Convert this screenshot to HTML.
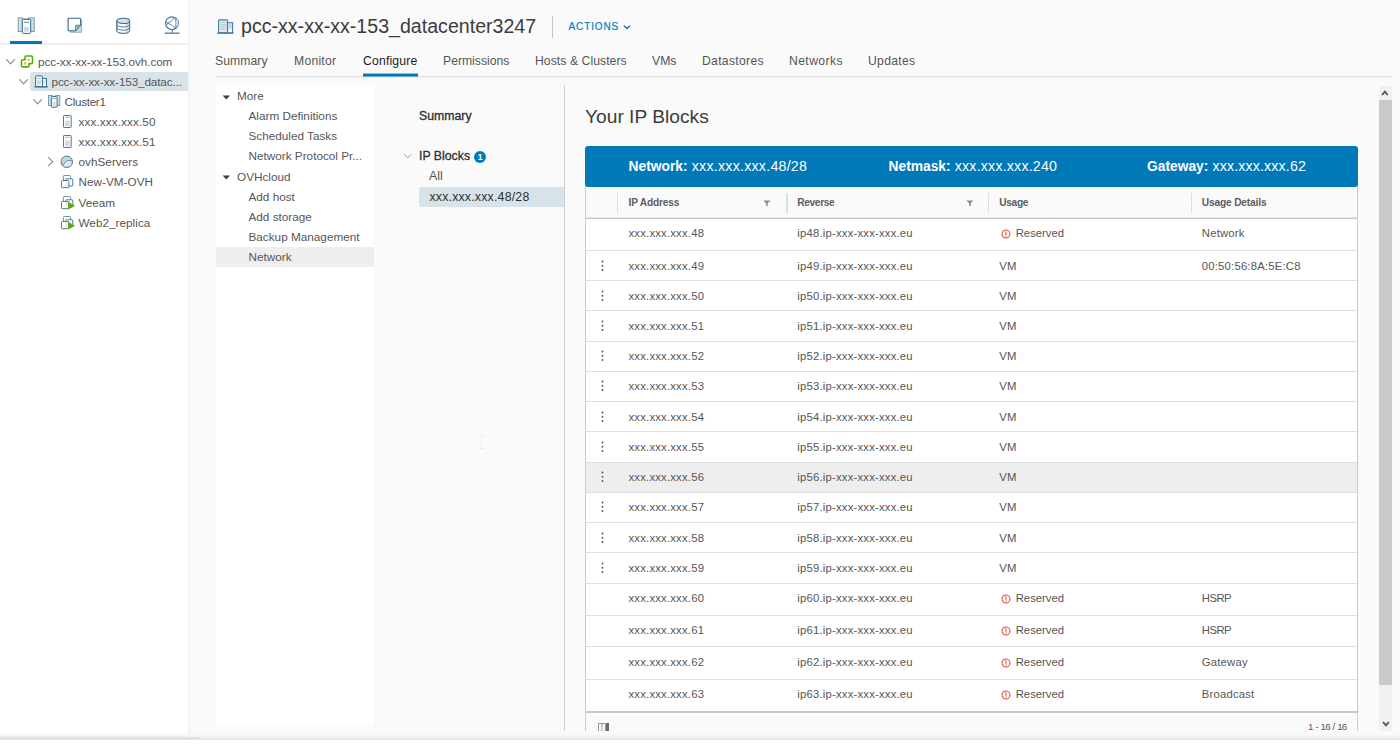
<!DOCTYPE html>
<html>
<head>
<meta charset="utf-8">
<title>vSphere Client</title>
<style>
html,body{margin:0;padding:0;}
body{width:1400px;height:744px;overflow:hidden;background:#fff;font-family:"Liberation Sans",sans-serif;color:#565656;position:relative;}
.abs{position:absolute;}
.t{position:absolute;white-space:nowrap;line-height:20px;height:20px;}
svg{display:block;position:absolute;overflow:visible;}
/* left nav */
#nav{position:absolute;left:0;top:0;width:188px;height:738px;background:#fff;}
#main{position:absolute;left:188px;top:0;width:1212px;height:738px;background:#fafafa;}
#navshadow{position:absolute;left:188px;top:0;width:3px;height:737px;background:linear-gradient(to right,#eef0f2,#fafafa);}
.tree{font-size:11.7px;color:#565656;}
.sel{position:absolute;background:#d8e3e9;}
/* tabs */
.tab{font-size:12.2px;color:#565656;}
.menu{font-size:11.75px;color:#565656;}
.cell{font-size:11.3px;letter-spacing:0.2px;color:#565656;}
.hd{font-size:10.2px;font-weight:700;color:#5e5e5e;}
.hl{position:absolute;height:1px;background:#e0e0e0;}
.vl{position:absolute;width:1px;background:#ccc;}
</style>
</head>
<body>
<div id="main"></div>
<div id="nav"></div>
<div id="navshadow"></div>

<!-- NAV-ICONS -->
<svg width="0" height="0" style="position:absolute">
<defs>
  <g id="i-host">
    <rect x="0.5" y="0.5" width="7.7" height="12" rx="0.6" fill="#fff" stroke="#4a7c99" stroke-width="1"/>
    <rect x="2" y="5.6" width="4.7" height="5.6" fill="#cfdbe2"/>
    <line x1="2.2" y1="2.3" x2="6.5" y2="2.3" stroke="#7fa2b6" stroke-width="0.8"/>
  </g>
  <g id="i-vm">
    <rect x="2.4" y="0.5" width="7.2" height="7.2" rx="0.8" fill="#fff" stroke="#6d96ad" stroke-width="1"/>
    <rect x="4.6" y="3.8" width="7.2" height="7.2" rx="0.8" fill="#fff" stroke="#4a7c99" stroke-width="1"/>
    <rect x="0.5" y="5.5" width="7.4" height="7.2" rx="0.8" fill="#fff" stroke="#4a7c99" stroke-width="1"/>
    <rect x="4.6" y="6.2" width="1.4" height="5.6" fill="#dfe7ec"/>
  </g>
  <g id="i-vmon">
    <use href="#i-vm"/>
    <path d="M7 5.8 L14 9.7 L7 13.6 Z" fill="#62a420"/>
  </g>
  <g id="i-cluster">
    <rect x="0.5" y="0.5" width="4" height="10" fill="#d5dfe5" stroke="#6d96ad" stroke-width="0.9"/>
    <rect x="7.8" y="0.5" width="4" height="10" fill="#d5dfe5" stroke="#6d96ad" stroke-width="0.9"/>
    <rect x="3.3" y="1.6" width="5.8" height="10.6" rx="0.7" fill="#fff" stroke="#37698a" stroke-width="1"/>
    <rect x="4.6" y="7.2" width="3.2" height="3.6" fill="#cfdbe2"/>
    <line x1="4.6" y1="3.6" x2="7.8" y2="3.6" stroke="#5f8ca5" stroke-width="0.8"/>
  </g>
  <g id="chev-d" fill="none" stroke="#8c8c8c" stroke-width="1.2" stroke-linecap="round" stroke-linejoin="round">
    <path d="M0.6 0.6 L4.6 4.8 L8.6 0.6"/>
  </g>
  <g id="chev-r" fill="none" stroke="#8c8c8c" stroke-width="1.2" stroke-linecap="round" stroke-linejoin="round">
    <path d="M0.6 0.6 L4.8 4.6 L0.6 8.6"/>
  </g>
</defs>
</svg>

<!-- top nav icon 1: hosts & clusters -->
<svg style="left:17px;top:17px" width="18" height="17" viewBox="0 0 18 17">
  <rect x="1.2" y="0.9" width="4.6" height="13.6" fill="#d3dee4" stroke="#6a93aa" stroke-width="0.9"/>
  <rect x="11.6" y="0.9" width="5.6" height="13.6" fill="#d3dee4" stroke="#6a93aa" stroke-width="0.9"/>
  <rect x="5.3" y="2.4" width="8.4" height="14" rx="0.9" fill="#fff" stroke="#37698a" stroke-width="1"/>
  <path d="M8 2.4 V1.2 M10.9 2.4 V1.2" stroke="#37698a" stroke-width="0.9"/>
  <line x1="7" y1="5.3" x2="12" y2="5.3" stroke="#4a7c99" stroke-width="0.9"/>
  <rect x="7" y="9.9" width="5" height="4.7" fill="#cfdbe2"/>
</svg>
<!-- icon 2: vms & templates -->
<svg style="left:67.4px;top:17.3px" width="17" height="17" viewBox="0 0 17 17">
  <path d="M3.2 3.2 H14.6 V15.3 H3.2 Z" fill="#c9d6dd" stroke="#7fa2b6" stroke-width="0.8"/>
  <path d="M1.9 1.2 H12.4 Q13.7 1.2 13.7 2.5 V8.2 L8.4 13.7 H1.9 Q1.1 13.7 1.1 12.9 V2 Q1.1 1.2 1.9 1.2 Z" fill="#fff" stroke="#2f6588" stroke-width="1.1" stroke-linejoin="round"/>
  <path d="M13.7 8.2 H9.2 Q8.4 8.2 8.4 9 V13.7 Z" fill="#9fb8c6" stroke="#4a7c99" stroke-width="0.8" stroke-linejoin="round"/>
</svg>
<!-- icon 3: storage -->
<svg style="left:116px;top:17px" width="15" height="17" viewBox="0 0 15 17">
  <path d="M0.8 3.9 V13.7 C0.8 15.2 3.8 16.4 7.2 16.4 C10.6 16.4 13.6 15.2 13.6 13.7 V3.9" fill="#fff" stroke="#4a7c99" stroke-width="1"/>
  <path d="M9.5 6 C12 5.7 13.6 4.9 13.6 3.9 V13.7 C13.6 14.8 12 15.7 9.5 16.1 Z" fill="#d5dfe5"/>
  <ellipse cx="7.2" cy="3.9" rx="6.4" ry="2.6" fill="#d5dfe5" stroke="#3c708f" stroke-width="1.1"/>
  <path d="M0.8 7.2 C0.8 8.8 3.8 9.9 7.2 9.9 C10.6 9.9 13.6 8.8 13.6 7.2" fill="none" stroke="#4a7c99" stroke-width="1"/>
  <path d="M0.8 10.5 C0.8 12.1 3.8 13.2 7.2 13.2 C10.6 13.2 13.6 12.1 13.6 10.5" fill="none" stroke="#4a7c99" stroke-width="1"/>
  <path d="M0.8 3.9 V13.7 C0.8 15.2 3.8 16.4 7.2 16.4 C10.6 16.4 13.6 15.2 13.6 13.7 V3.9" fill="none" stroke="#4a7c99" stroke-width="1"/>
</svg>
<!-- icon 4: networking -->
<svg style="left:164px;top:16.4px" width="17" height="19" viewBox="0 0 17 19">
  <circle cx="8" cy="7.2" r="6.4" fill="#fff" stroke="#4a7c99" stroke-width="1.2"/>
  <path d="M11 1.6 C13.8 4.5 13.8 10 11.2 13 L14.3 9 V5 Z" fill="#cfdbe2"/>
  <path d="M10.6 1.3 C8.5 4.8 6.2 6.2 3.6 7.2 C6.5 8 10 10 11.2 12.9 M10.6 1.3 C12.4 5 12.4 9.6 11.2 12.9 M3.6 7.2 L1.9 5.2 M3.6 7.2 L2.2 10.2" fill="none" stroke="#5f8ca5" stroke-width="1"/>
  <line x1="8.3" y1="13.8" x2="8.3" y2="17" stroke="#4a7c99" stroke-width="1"/>
  <line x1="0.8" y1="17.2" x2="15.5" y2="17.2" stroke="#4a7c99" stroke-width="1.3"/>
</svg>
<div class="abs" style="left:0;top:43px;width:188px;height:2px;background:#eeeeee"></div>
<div class="abs" style="left:10px;top:41px;width:32px;height:3px;background:#0079b8"></div>
<!-- TREE -->
<div class="sel" style="left:30px;top:72px;width:158px;height:19px;border-radius:3px 0 0 3px"></div>
<svg style="left:6px;top:59px" width="10" height="6"><use href="#chev-d"/></svg>
<svg style="left:20px;top:54px" width="14" height="14" viewBox="0 0 14 14">
  <path d="M5 5.7 V3.2 Q5 2 6.2 2 H11.3 Q12.5 2 12.5 3.2 V8.4 Q12.5 9.6 11.3 9.6 H9 V11.7 Q9 12.9 7.8 12.9 H2.7 Q1.5 12.9 1.5 11.7 V6.9 Q1.5 5.7 2.7 5.7 Z" fill="#fff" stroke="#55ad12" stroke-width="1.6" stroke-linejoin="round"/>
  <rect x="7.5" y="4.9" width="2.2" height="2.2" fill="#fdb515"/>
  <rect x="4.2" y="8.2" width="2.2" height="2.2" fill="#fdb515"/>
</svg>
<div class="t tree" style="left:38px;top:51.5px;letter-spacing:-0.06px">pcc-xx-xx-xx-153.ovh.com</div>

<svg style="left:19px;top:79px" width="10" height="6"><use href="#chev-d"/></svg>
<svg style="left:34px;top:75px" width="14" height="13" viewBox="0 0 14 13">
  <rect x="1.5" y="0.8" width="7" height="11" rx="0.9" fill="#e9eff3" stroke="#41748f" stroke-width="1"/>
  <rect x="8.5" y="3.5" width="4" height="8.3" fill="#f7f9fa" stroke="#41748f" stroke-width="1"/>
  <path d="M3.2 3.4 H6.9 M3.2 8 H6.9 M9.6 8 H11" stroke="#9db6c5" stroke-width="0.8"/>
  <path d="M3.6 5.2 V6.8 M5 5.2 V6.8 M6.4 5.2 V6.8 M9.8 5.4 V6.8 M11 5.4 V6.8" stroke="#b4c7d2" stroke-width="0.7"/>
  <line x1="0.4" y1="11.8" x2="13.7" y2="11.8" stroke="#41748f" stroke-width="1.3"/>
</svg>
<div class="t tree" style="left:51.5px;top:71.5px;letter-spacing:-0.11px">pcc-xx-xx-xx-153_datac...</div>

<svg style="left:32.5px;top:99px" width="10" height="6"><use href="#chev-d"/></svg>
<svg style="left:48px;top:95px" width="13" height="13"><use href="#i-cluster"/></svg>
<div class="t tree" style="left:64.5px;top:91.5px;letter-spacing:-0.3px">Cluster1</div>

<svg style="left:62.5px;top:115px" width="9" height="13"><use href="#i-host"/></svg>
<div class="t tree" style="left:78.5px;top:112px;letter-spacing:0.12px">xxx.xxx.xxx.50</div>
<svg style="left:62.5px;top:135px" width="9" height="13"><use href="#i-host"/></svg>
<div class="t tree" style="left:78.5px;top:132px;letter-spacing:0.12px">xxx.xxx.xxx.51</div>

<svg style="left:48px;top:157px" width="6" height="10"><use href="#chev-r"/></svg>
<svg style="left:60px;top:155px" width="14" height="14" viewBox="0 0 14 14">
  <circle cx="6.7" cy="6.8" r="5.7" fill="#c5d5de" stroke="#4a7c99" stroke-width="1"/>
  <path d="M2.2 10.2 C4.5 9.4 5.2 6.4 7.4 5.6 C9 5.2 11 5.8 12.3 5.9 A5.7 5.7 0 0 1 2.2 10.2 Z" fill="#e3eaee" stroke="#4a7c99" stroke-width="0.8"/>
</svg>
<div class="t tree" style="left:78.5px;top:152px;letter-spacing:0.05px">ovhServers</div>

<svg style="left:61px;top:175px" width="14" height="14"><use href="#i-vm"/></svg>
<div class="t tree" style="left:78.5px;top:172px;letter-spacing:0.05px">New-VM-OVH</div>
<svg style="left:61px;top:195.5px" width="14" height="14"><use href="#i-vmon"/></svg>
<div class="t tree" style="left:78.5px;top:192.6px;letter-spacing:0.05px">Veeam</div>
<svg style="left:61px;top:216px" width="14" height="14"><use href="#i-vmon"/></svg>
<div class="t tree" style="left:78.5px;top:213px;letter-spacing:0.05px">Web2_replica</div>
<!-- HEADER -->
<svg style="left:216.5px;top:19px" width="17" height="15" viewBox="0 0 17 15">
  <rect x="1.6" y="0.9" width="8.9" height="13" rx="0.6" fill="#e3eaee" stroke="#4a7c99" stroke-width="1.1"/>
  <rect x="10.5" y="3.7" width="5.1" height="10.2" fill="#e3eaee" stroke="#4a7c99" stroke-width="1.1"/>
  <path d="M3.4 3.4 H8.7 M3.4 5.6 H8.7 M3.4 7.8 H8.7 M3.4 10 H8.7 M11.8 6 H14.4 M11.8 8.2 H14.4" stroke="#8fb0c2" stroke-width="1"/>
  <path d="M4.7 2.6 V11 M6.1 2.6 V11 M7.5 2.6 V11 M13.1 5.2 V9" stroke="#e3eaee" stroke-width="0.6"/>
  <rect x="11.5" y="11.2" width="2.6" height="2.2" fill="#fff"/>
  <line x1="0.4" y1="14.1" x2="16.5" y2="14.1" stroke="#4a7c99" stroke-width="1.4"/>
</svg>
<div class="t" style="left:241px;top:11.9px;font-size:19.6px;line-height:28px;height:28px;color:#3c3c3c">pcc-xx-xx-xx-153_datacenter3247</div>
<div class="abs" style="left:552px;top:16px;width:1px;height:22px;background:#c6c6c6"></div>
<div class="t" style="left:568.6px;top:17px;font-size:10px;letter-spacing:0.85px;color:#0079b8;font-weight:400;-webkit-text-stroke:0.15px #0079b8">ACTIONS</div>
<svg style="left:622.5px;top:24.6px" width="8" height="5" viewBox="0 0 8 5"><path d="M1.3 1 L4 3.5 L6.7 1" fill="none" stroke="#0079b8" stroke-width="1.4" stroke-linecap="round" stroke-linejoin="round"/></svg>

<div class="t tab" style="left:215px;top:51px;letter-spacing:0.06px">Summary</div>
<div class="t tab" style="left:294px;top:51px;letter-spacing:0.23px">Monitor</div>
<div class="t tab" style="left:363px;top:51px;letter-spacing:0.18px;color:#1a1a1a">Configure</div>
<div class="t tab" style="left:443px;top:51px;letter-spacing:0px">Permissions</div>
<div class="t tab" style="left:535px;top:51px;letter-spacing:0.06px">Hosts &amp; Clusters</div>
<div class="t tab" style="left:652px;top:51px;letter-spacing:0px">VMs</div>
<div class="t tab" style="left:702px;top:51px;letter-spacing:0.29px">Datastores</div>
<div class="t tab" style="left:789px;top:51px;letter-spacing:0.39px">Networks</div>
<div class="t tab" style="left:868px;top:51px;letter-spacing:0.28px">Updates</div>
<div class="abs" style="left:215px;top:76px;width:1177px;height:1px;background:#e2e2e2"></div>
<div class="abs" style="left:215px;top:77px;width:1177px;height:1px;background:#f1f1f1"></div>
<div class="abs" style="left:363px;top:73px;width:55px;height:4px;background:linear-gradient(to bottom,rgba(0,121,184,0.45) 0,rgba(0,121,184,0.45) 25%,#0079b8 25%,#0079b8 75%,rgba(0,121,184,0.55) 75%)"></div>
<!-- CONFIGMENU -->
<div class="abs" style="left:216px;top:85px;width:158px;height:640px;background:#fff"></div>
<div class="abs" style="left:216px;top:247px;width:158px;height:20px;background:#eeeeee"></div>
<svg style="left:222px;top:94.5px" width="9" height="5" viewBox="0 0 9 5"><path d="M0.6 0.4 H8 L4.3 4.4 Z" fill="#3c3c3c"/></svg>
<div class="t menu" style="left:237px;top:86px">More</div>
<div class="t menu" style="left:248.5px;top:106px">Alarm Definitions</div>
<div class="t menu" style="left:248.5px;top:126px">Scheduled Tasks</div>
<div class="t menu" style="left:248.5px;top:146px">Network Protocol Pr...</div>
<svg style="left:222px;top:175.2px" width="9" height="5" viewBox="0 0 9 5"><path d="M0.6 0.4 H8 L4.3 4.4 Z" fill="#3c3c3c"/></svg>
<div class="t menu" style="left:237px;top:167px">OVHcloud</div>
<div class="t menu" style="left:248.5px;top:187px">Add host</div>
<div class="t menu" style="left:248.5px;top:207px">Add storage</div>
<div class="t menu" style="left:248.5px;top:227px">Backup Management</div>
<div class="t menu" style="left:248.5px;top:247px">Network</div>
<!-- MIDPANEL -->
<div class="abs" style="left:564px;top:85px;width:1px;height:648px;background:#d0d0d0"></div>
<div class="t" style="left:419px;top:106px;font-size:12.3px;color:#2e2e2e;font-weight:400;-webkit-text-stroke:0.3px #2e2e2e">Summary</div>
<svg style="left:404px;top:153.5px" width="8" height="5" viewBox="0 0 8 5"><path d="M0.6 0.6 L3.8 3.9 L7 0.6" fill="none" stroke="#9a9a9a" stroke-width="1" stroke-linecap="round" stroke-linejoin="round"/></svg>
<div class="t" style="left:419px;top:146px;font-size:12.3px;color:#2e2e2e;-webkit-text-stroke:0.3px #2e2e2e">IP Blocks</div>
<div class="abs" style="left:474px;top:151px;width:12px;height:12px;border-radius:6px;background:#0079b8;color:#fff;font-size:8.5px;font-weight:700;line-height:12px;text-align:center">1</div>
<div class="t" style="left:429px;top:166px;font-size:12.3px;color:#565656">All</div>
<div class="abs" style="left:419px;top:186.5px;width:145px;height:20.5px;background:#d8e3e9;border-radius:3px 0 0 3px"></div>
<div class="t" style="left:429.4px;top:187px;font-size:12.3px;letter-spacing:0.22px;color:#2e2e2e">xxx.xxx.xxx.48/28</div>
<svg id="ibeam" style="left:478px;top:435px" width="8" height="15" viewBox="0 0 8 15"><path d="M0.5 0.8 H6.5 M3.5 0.8 V13.6 M0.5 13.6 H6.5" fill="none" stroke="#ededed" stroke-width="1"/></svg>
<!-- CONTENT -->
<div class="t" style="left:585px;top:102.5px;font-size:19.2px;line-height:28px;height:28px;color:#3c3c3c">Your IP Blocks</div>
<div class="abs" style="left:585px;top:185px;width:773px;height:546px;background:#fff;border-left:1px solid #ccc;border-right:1px solid #ccc;box-sizing:border-box"></div>
<div class="abs" style="left:586px;top:187px;width:771px;height:31px;background:#fafafa"></div>
<div class="abs" style="left:586px;top:462.5px;width:771px;height:30px;background:#eeeeee"></div>
<div class="abs" style="left:586px;top:713px;width:771px;height:18px;background:#fafafa"></div>
<div class="abs" style="left:585px;top:146px;width:773px;height:41px;background:#0079b8;border-radius:3px"></div>
<div class="t" style="left:628.5px;top:156px;font-size:14.2px;color:#fff;letter-spacing:0.25px"><b style="font-size:13.8px;letter-spacing:0">Network:</b> xxx.xxx.xxx.48/28</div>
<div class="t" style="left:888.5px;top:156px;font-size:14.2px;color:#fff;letter-spacing:0.2px"><b style="font-size:13.8px;letter-spacing:0">Netmask:</b> xxx.xxx.xxx.240</div>
<div class="t" style="left:1147px;top:156px;font-size:14.2px;color:#fff;letter-spacing:0.15px"><b style="font-size:13.8px;letter-spacing:0">Gateway:</b> xxx.xxx.xxx.62</div>
<div class="t hd" style="left:628.5px;top:192.5px;letter-spacing:-0.2px">IP Address</div>
<div class="t hd" style="left:797.3px;top:192.5px;letter-spacing:-0.38px">Reverse</div>
<div class="t hd" style="left:999.2px;top:192.5px;letter-spacing:-0.32px">Usage</div>
<div class="t hd" style="left:1201.8px;top:192.5px;letter-spacing:-0.17px">Usage Details</div>
<div class="abs" style="left:616.8px;top:192.5px;width:1.5px;height:20.5px;background:#dedede"></div>
<div class="abs" style="left:786px;top:192.5px;width:1.5px;height:20.5px;background:#dedede"></div>
<div class="abs" style="left:987.8px;top:192.5px;width:1.5px;height:20.5px;background:#dedede"></div>
<div class="abs" style="left:1190.8px;top:192.5px;width:1.5px;height:20.5px;background:#dedede"></div>
<svg style="left:763px;top:200px" width="8" height="7" viewBox="0 0 8 7"><path d="M0.3 0.4 H7.5 L4.7 3.3 V6.4 L3.1 5.6 V3.3 Z" fill="#8a8a8a"/></svg>
<svg style="left:966px;top:200px" width="8" height="7" viewBox="0 0 8 7"><path d="M0.3 0.4 H7.5 L4.7 3.3 V6.4 L3.1 5.6 V3.3 Z" fill="#8a8a8a"/></svg>
<div class="abs" style="left:586px;top:217px;width:771px;height:1px;background:#e4e4e4"></div>
<div class="abs" style="left:586px;top:218px;width:771px;height:1.3px;background:#c6c6c6"></div>
<div class="hl" style="left:586px;top:250.00px;width:771px"></div>
<div class="hl" style="left:586px;top:280.23px;width:771px"></div>
<div class="hl" style="left:586px;top:310.46px;width:771px"></div>
<div class="hl" style="left:586px;top:340.69px;width:771px"></div>
<div class="hl" style="left:586px;top:370.92px;width:771px"></div>
<div class="hl" style="left:586px;top:401.15px;width:771px"></div>
<div class="hl" style="left:586px;top:431.38px;width:771px"></div>
<div class="hl" style="left:586px;top:461.61px;width:771px"></div>
<div class="hl" style="left:586px;top:491.84px;width:771px"></div>
<div class="hl" style="left:586px;top:522.07px;width:771px"></div>
<div class="hl" style="left:586px;top:552.30px;width:771px"></div>
<div class="hl" style="left:586px;top:582.53px;width:771px"></div>
<div class="hl" style="left:586px;top:614.50px;width:771px"></div>
<div class="hl" style="left:586px;top:646.10px;width:771px"></div>
<div class="hl" style="left:586px;top:678.75px;width:771px"></div>
<div class="t cell" style="left:628.5px;top:223.00px">xxx.xxx.xxx.48</div>
<div class="t cell" style="left:797.3px;top:223.00px">ip48.ip-xxx-xxx-xxx.eu</div>
<svg style="left:1000.5px;top:229.30px" width="10" height="10" viewBox="0 0 10 10"><circle cx="5" cy="5" r="3.95" fill="none" stroke="#e5523b" stroke-width="1.1"/><path d="M5 2.7 V5.6" stroke="#e5523b" stroke-width="1.1" stroke-linecap="round"/><circle cx="5" cy="7.2" r="0.65" fill="#e5523b"/></svg>
<div class="t cell" style="left:1015.7px;top:223.00px;letter-spacing:0">Reserved</div>
<div class="t cell" style="left:1201.8px;top:223.00px">Network</div>
<div class="t cell" style="left:628.5px;top:256.00px">xxx.xxx.xxx.49</div>
<div class="t cell" style="left:797.3px;top:256.00px">ip49.ip-xxx-xxx-xxx.eu</div>
<div class="t cell" style="left:999.2px;top:256.00px">VM</div>
<svg style="left:601.2px;top:260.25px" width="3" height="11" viewBox="0 0 3 11"><circle cx="1.5" cy="1.45" r="0.95" fill="#565656"/><circle cx="1.5" cy="5.7" r="0.95" fill="#565656"/><circle cx="1.5" cy="9.95" r="0.95" fill="#565656"/></svg>
<div class="t cell" style="left:1201.8px;top:256.00px">00:50:56:8A:5E:C8</div>
<div class="t cell" style="left:628.5px;top:286.00px">xxx.xxx.xxx.50</div>
<div class="t cell" style="left:797.3px;top:286.00px">ip50.ip-xxx-xxx-xxx.eu</div>
<div class="t cell" style="left:999.2px;top:286.00px">VM</div>
<svg style="left:601.2px;top:290.25px" width="3" height="11" viewBox="0 0 3 11"><circle cx="1.5" cy="1.45" r="0.95" fill="#565656"/><circle cx="1.5" cy="5.7" r="0.95" fill="#565656"/><circle cx="1.5" cy="9.95" r="0.95" fill="#565656"/></svg>
<div class="t cell" style="left:628.5px;top:316.00px">xxx.xxx.xxx.51</div>
<div class="t cell" style="left:797.3px;top:316.00px">ip51.ip-xxx-xxx-xxx.eu</div>
<div class="t cell" style="left:999.2px;top:316.00px">VM</div>
<svg style="left:601.2px;top:320.25px" width="3" height="11" viewBox="0 0 3 11"><circle cx="1.5" cy="1.45" r="0.95" fill="#565656"/><circle cx="1.5" cy="5.7" r="0.95" fill="#565656"/><circle cx="1.5" cy="9.95" r="0.95" fill="#565656"/></svg>
<div class="t cell" style="left:628.5px;top:346.00px">xxx.xxx.xxx.52</div>
<div class="t cell" style="left:797.3px;top:346.00px">ip52.ip-xxx-xxx-xxx.eu</div>
<div class="t cell" style="left:999.2px;top:346.00px">VM</div>
<svg style="left:601.2px;top:350.25px" width="3" height="11" viewBox="0 0 3 11"><circle cx="1.5" cy="1.45" r="0.95" fill="#565656"/><circle cx="1.5" cy="5.7" r="0.95" fill="#565656"/><circle cx="1.5" cy="9.95" r="0.95" fill="#565656"/></svg>
<div class="t cell" style="left:628.5px;top:376.00px">xxx.xxx.xxx.53</div>
<div class="t cell" style="left:797.3px;top:376.00px">ip53.ip-xxx-xxx-xxx.eu</div>
<div class="t cell" style="left:999.2px;top:376.00px">VM</div>
<svg style="left:601.2px;top:380.25px" width="3" height="11" viewBox="0 0 3 11"><circle cx="1.5" cy="1.45" r="0.95" fill="#565656"/><circle cx="1.5" cy="5.7" r="0.95" fill="#565656"/><circle cx="1.5" cy="9.95" r="0.95" fill="#565656"/></svg>
<div class="t cell" style="left:628.5px;top:407.00px">xxx.xxx.xxx.54</div>
<div class="t cell" style="left:797.3px;top:407.00px">ip54.ip-xxx-xxx-xxx.eu</div>
<div class="t cell" style="left:999.2px;top:407.00px">VM</div>
<svg style="left:601.2px;top:411.25px" width="3" height="11" viewBox="0 0 3 11"><circle cx="1.5" cy="1.45" r="0.95" fill="#565656"/><circle cx="1.5" cy="5.7" r="0.95" fill="#565656"/><circle cx="1.5" cy="9.95" r="0.95" fill="#565656"/></svg>
<div class="t cell" style="left:628.5px;top:437.00px">xxx.xxx.xxx.55</div>
<div class="t cell" style="left:797.3px;top:437.00px">ip55.ip-xxx-xxx-xxx.eu</div>
<div class="t cell" style="left:999.2px;top:437.00px">VM</div>
<svg style="left:601.2px;top:441.25px" width="3" height="11" viewBox="0 0 3 11"><circle cx="1.5" cy="1.45" r="0.95" fill="#565656"/><circle cx="1.5" cy="5.7" r="0.95" fill="#565656"/><circle cx="1.5" cy="9.95" r="0.95" fill="#565656"/></svg>
<div class="t cell" style="left:628.5px;top:467.00px">xxx.xxx.xxx.56</div>
<div class="t cell" style="left:797.3px;top:467.00px">ip56.ip-xxx-xxx-xxx.eu</div>
<div class="t cell" style="left:999.2px;top:467.00px">VM</div>
<svg style="left:601.2px;top:471.25px" width="3" height="11" viewBox="0 0 3 11"><circle cx="1.5" cy="1.45" r="0.95" fill="#565656"/><circle cx="1.5" cy="5.7" r="0.95" fill="#565656"/><circle cx="1.5" cy="9.95" r="0.95" fill="#565656"/></svg>
<div class="t cell" style="left:628.5px;top:497.00px">xxx.xxx.xxx.57</div>
<div class="t cell" style="left:797.3px;top:497.00px">ip57.ip-xxx-xxx-xxx.eu</div>
<div class="t cell" style="left:999.2px;top:497.00px">VM</div>
<svg style="left:601.2px;top:501.25px" width="3" height="11" viewBox="0 0 3 11"><circle cx="1.5" cy="1.45" r="0.95" fill="#565656"/><circle cx="1.5" cy="5.7" r="0.95" fill="#565656"/><circle cx="1.5" cy="9.95" r="0.95" fill="#565656"/></svg>
<div class="t cell" style="left:628.5px;top:528.00px">xxx.xxx.xxx.58</div>
<div class="t cell" style="left:797.3px;top:528.00px">ip58.ip-xxx-xxx-xxx.eu</div>
<div class="t cell" style="left:999.2px;top:528.00px">VM</div>
<svg style="left:601.2px;top:532.25px" width="3" height="11" viewBox="0 0 3 11"><circle cx="1.5" cy="1.45" r="0.95" fill="#565656"/><circle cx="1.5" cy="5.7" r="0.95" fill="#565656"/><circle cx="1.5" cy="9.95" r="0.95" fill="#565656"/></svg>
<div class="t cell" style="left:628.5px;top:558.00px">xxx.xxx.xxx.59</div>
<div class="t cell" style="left:797.3px;top:558.00px">ip59.ip-xxx-xxx-xxx.eu</div>
<div class="t cell" style="left:999.2px;top:558.00px">VM</div>
<svg style="left:601.2px;top:562.25px" width="3" height="11" viewBox="0 0 3 11"><circle cx="1.5" cy="1.45" r="0.95" fill="#565656"/><circle cx="1.5" cy="5.7" r="0.95" fill="#565656"/><circle cx="1.5" cy="9.95" r="0.95" fill="#565656"/></svg>
<div class="t cell" style="left:628.5px;top:588.00px">xxx.xxx.xxx.60</div>
<div class="t cell" style="left:797.3px;top:588.00px">ip60.ip-xxx-xxx-xxx.eu</div>
<svg style="left:1000.5px;top:594.30px" width="10" height="10" viewBox="0 0 10 10"><circle cx="5" cy="5" r="3.95" fill="none" stroke="#e5523b" stroke-width="1.1"/><path d="M5 2.7 V5.6" stroke="#e5523b" stroke-width="1.1" stroke-linecap="round"/><circle cx="5" cy="7.2" r="0.65" fill="#e5523b"/></svg>
<div class="t cell" style="left:1015.7px;top:588.00px;letter-spacing:0">Reserved</div>
<div class="t cell" style="left:1201.8px;top:588.00px;letter-spacing:-0.55px">HSRP</div>
<div class="t cell" style="left:628.5px;top:620.00px">xxx.xxx.xxx.61</div>
<div class="t cell" style="left:797.3px;top:620.00px">ip61.ip-xxx-xxx-xxx.eu</div>
<svg style="left:1000.5px;top:626.30px" width="10" height="10" viewBox="0 0 10 10"><circle cx="5" cy="5" r="3.95" fill="none" stroke="#e5523b" stroke-width="1.1"/><path d="M5 2.7 V5.6" stroke="#e5523b" stroke-width="1.1" stroke-linecap="round"/><circle cx="5" cy="7.2" r="0.65" fill="#e5523b"/></svg>
<div class="t cell" style="left:1015.7px;top:620.00px;letter-spacing:0">Reserved</div>
<div class="t cell" style="left:1201.8px;top:620.00px;letter-spacing:-0.55px">HSRP</div>
<div class="t cell" style="left:628.5px;top:652.00px">xxx.xxx.xxx.62</div>
<div class="t cell" style="left:797.3px;top:652.00px">ip62.ip-xxx-xxx-xxx.eu</div>
<svg style="left:1000.5px;top:658.30px" width="10" height="10" viewBox="0 0 10 10"><circle cx="5" cy="5" r="3.95" fill="none" stroke="#e5523b" stroke-width="1.1"/><path d="M5 2.7 V5.6" stroke="#e5523b" stroke-width="1.1" stroke-linecap="round"/><circle cx="5" cy="7.2" r="0.65" fill="#e5523b"/></svg>
<div class="t cell" style="left:1015.7px;top:652.00px;letter-spacing:0">Reserved</div>
<div class="t cell" style="left:1201.8px;top:652.00px">Gateway</div>
<div class="t cell" style="left:628.5px;top:684.00px">xxx.xxx.xxx.63</div>
<div class="t cell" style="left:797.3px;top:684.00px">ip63.ip-xxx-xxx-xxx.eu</div>
<svg style="left:1000.5px;top:690.30px" width="10" height="10" viewBox="0 0 10 10"><circle cx="5" cy="5" r="3.95" fill="none" stroke="#e5523b" stroke-width="1.1"/><path d="M5 2.7 V5.6" stroke="#e5523b" stroke-width="1.1" stroke-linecap="round"/><circle cx="5" cy="7.2" r="0.65" fill="#e5523b"/></svg>
<div class="t cell" style="left:1015.7px;top:684.00px;letter-spacing:0">Reserved</div>
<div class="t cell" style="left:1201.8px;top:684.00px">Broadcast</div>
<div class="abs" style="left:586px;top:711px;width:771px;height:2px;background:#c8c8c8"></div>
<svg style="left:597.5px;top:722.5px" width="12" height="9" viewBox="0 0 12 9"><path d="M0.5 9 V0.5 H7.4 V9 M3.9 0.5 V9" fill="none" stroke="#9a9a9a" stroke-width="1"/><rect x="8" y="0" width="3" height="9" fill="#6a6a6a"/></svg>
<div class="t" style="left:1308px;top:717px;font-size:9.7px;letter-spacing:-0.85px;word-spacing:1px;color:#565656">1 - 16 / 16</div>
<!-- SCROLLBAR -->
<div class="abs" style="left:1379px;top:86px;width:13px;height:645px;background:#f1f1f1"></div>
<div class="abs" style="left:1379px;top:100px;width:12.5px;height:585px;background:#c9c9c9"></div>
<svg style="left:1381.2px;top:90.4px" width="8" height="6" viewBox="0 0 8 6"><path d="M1 5 L3.9 1.6 L6.8 5" fill="none" stroke="#505050" stroke-width="1.8" stroke-linejoin="miter"/></svg>
<svg style="left:1381.5px;top:720.5px" width="8" height="6" viewBox="0 0 8 6"><path d="M1 1 L3.9 4.4 L6.8 1" fill="none" stroke="#505050" stroke-width="1.8" stroke-linejoin="miter"/></svg>
<!-- BOTTOM -->
<div class="abs" style="left:0;top:731px;width:1400px;height:13px;background:#fff"></div>
<div class="abs" style="left:188px;top:731px;width:1212px;height:9px;background:linear-gradient(to bottom,#fafafa 0,#fafafa 33%,#f4f4f4 60%,#ebebeb 82%,#e3e3e3 100%)"></div>
<div class="abs" style="left:0;top:733px;width:188px;height:7px;background:linear-gradient(to bottom,#ffffff 0,#f4f4f4 45%,#e3e3e3 62%,#e0e0e0 100%)"></div>
<div class="abs" style="left:188px;top:731px;width:3px;height:6px;background:linear-gradient(to right,#eef0f2,#fafafa)"></div>
<div class="abs" style="left:188px;top:737px;width:11px;height:3px;background:#e1e1e1"></div>
</body>
</html>
